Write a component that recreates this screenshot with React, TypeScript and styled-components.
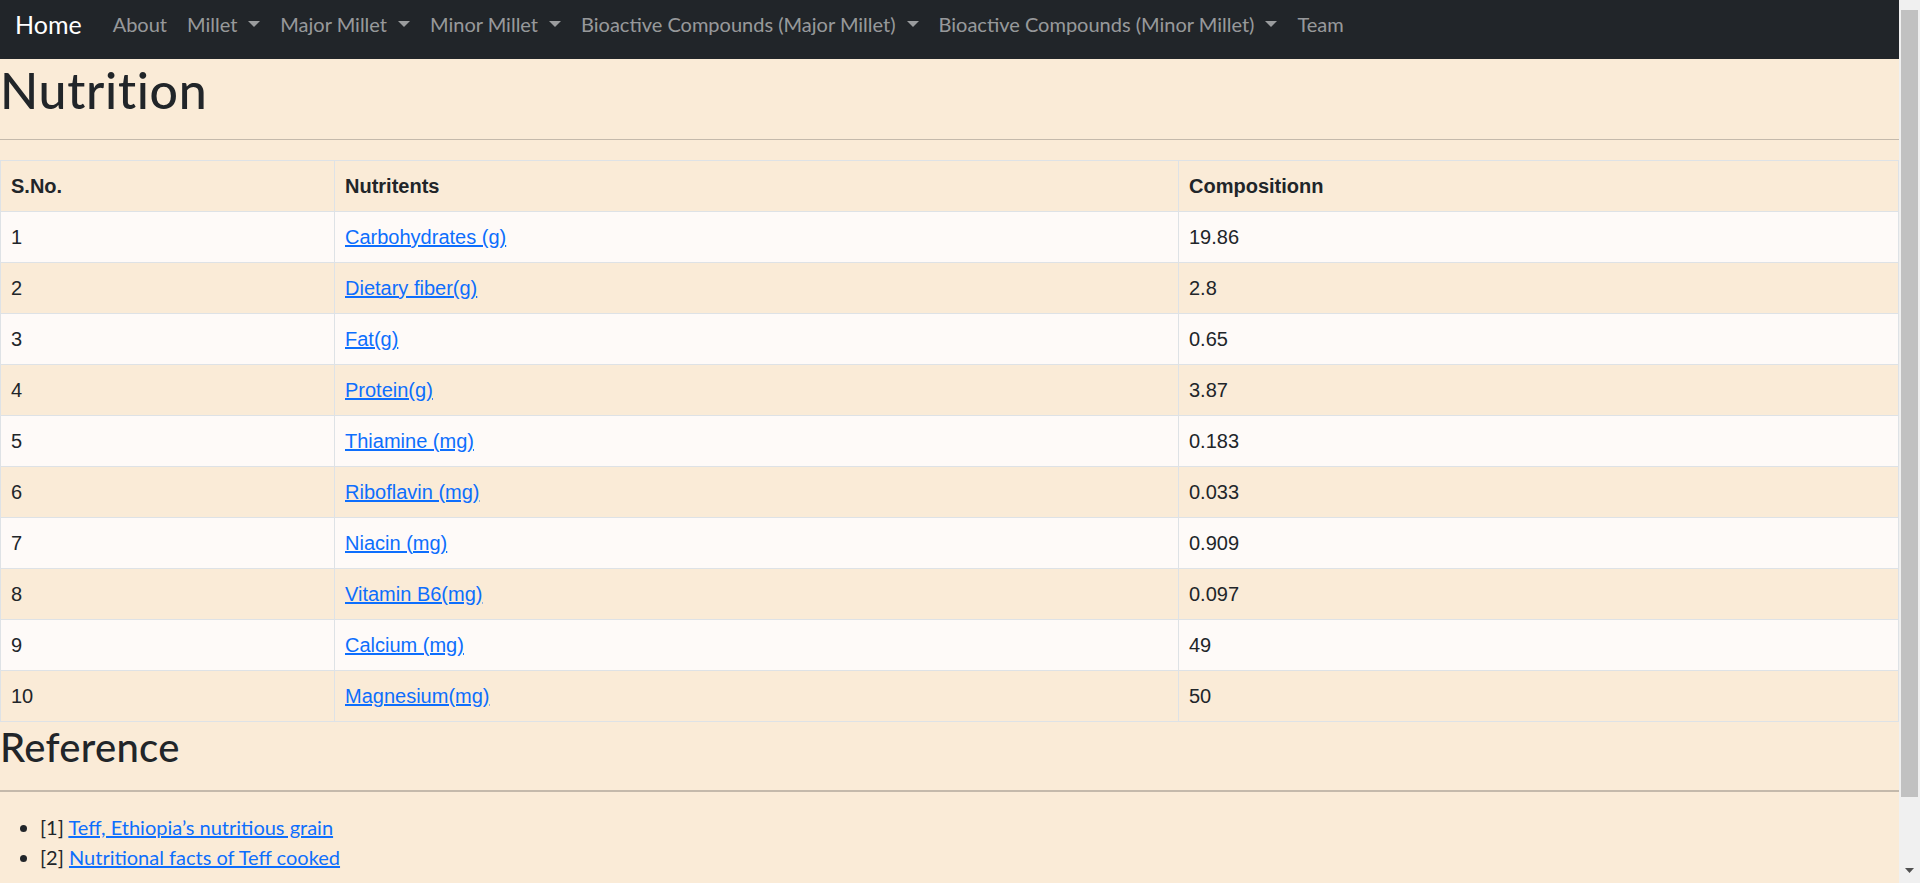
import React from 'react';
import styled, { createGlobalStyle, css } from 'styled-components';

const GlobalStyle = createGlobalStyle`
  body {
    margin: 0;
    background: #faebd7;
    color: #212529;
    font-family: Lato, "Open Sans", sans-serif;
    font-size: 20px;
    line-height: 1.5;
  }
`;

const Shell = styled.div`
  display: flex;
  align-items: flex-start;
`;

const Page = styled.div`
  flex: 1;
  min-width: 0;
`;

const ScrollTrack = styled.aside`
  width: 21px;
  height: 100vh;
  flex: none;
  display: flex;
  flex-direction: column;
  align-items: center;
  background: #f0f0f0;
`;

const ScrollThumb = styled.div`
  width: 17px;
  height: 787px;
  margin-top: 10px;
  background: #c1c1c1;
`;

const ScrollArrow = styled.svg`
  display: block;
  margin-top: auto;
  margin-bottom: 10px;
`;

const NavBar = styled.nav`
  display: flex;
  align-items: flex-start;
  height: 59px;
  box-sizing: border-box;
  padding: 9px 15px 0;
  background: #212529;
`;

const Brand = styled.a`
  font-size: 25px;
  line-height: 30px;
  color: #fff;
  margin-right: 21px;
  text-decoration: none;
`;

const NavList = styled.ul`
  display: flex;
  list-style: none;
  margin: 0;
  padding: 0;
`;

const NavLink = styled.a<{ $dropdown?: boolean }>`
  display: block;
  padding: 0 10px;
  font-size: 20px;
  line-height: 30px;
  color: rgba(255, 255, 255, 0.55);
  text-decoration: none;
  white-space: nowrap;
  ${(p) =>
    p.$dropdown &&
    css`
      &::after {
        content: '';
        display: inline-block;
        margin-left: 11px;
        vertical-align: 5px;
        border-top: 6px solid;
        border-right: 6px solid transparent;
        border-left: 6px solid transparent;
      }
    `}
`;

const PageTitle = styled.h1`
  margin: 0;
  padding-top: 2px;
  font-size: 50px;
  line-height: 58px;
  font-weight: 500;
  letter-spacing: 0.7px;
`;

const SectionTitle = styled.h2`
  margin: 0;
  padding-top: 2px;
  font-size: 40px;
  line-height: 46px;
  font-weight: 500;
  letter-spacing: 0.3px;
`;

const Rule = styled.hr<{ $thick?: boolean }>`
  margin: 20px 0;
  border: 0;
  border-top: ${(p) => (p.$thick ? 2 : 1)}px solid #c4b9ab;
`;

const Table = styled.table`
  width: 100%;
  border-collapse: collapse;
  table-layout: fixed;
  font-family: "Liberation Sans", Arial, sans-serif;
  font-size: 20px;
  line-height: 30px;
`;

const HeadCell = styled.th`
  padding: 10px;
  border: 1px solid #dee2e6;
  text-align: left;
  font-weight: bold;
  background: #faebd7;
`;

const Row = styled.tr<{ $odd: boolean }>`
  background: ${(p) => (p.$odd ? '#fefaf8' : '#faebd7')};
`;

const Cell = styled.td`
  padding: 10px;
  border: 1px solid #dee2e6;
`;

const Link = styled.a`
  color: #0d6efd;
  text-decoration: underline;
`;

const RefList = styled.ul`
  margin: 0 0 20px;
  padding-left: 40px;
  font-size: 20px;
  line-height: 30px;
`;

const navItems: { label: string; dropdown?: boolean }[] = [
  { label: 'About' },
  { label: 'Millet', dropdown: true },
  { label: 'Major Millet', dropdown: true },
  { label: 'Minor Millet', dropdown: true },
  { label: 'Bioactive Compounds (Major Millet)', dropdown: true },
  { label: 'Bioactive Compounds (Minor Millet)', dropdown: true },
  { label: 'Team' },
];

const nutrients: [string, string][] = [
  ['Carbohydrates (g)', '19.86'],
  ['Dietary fiber(g)', '2.8'],
  ['Fat(g)', '0.65'],
  ['Protein(g)', '3.87'],
  ['Thiamine (mg)', '0.183'],
  ['Riboflavin (mg)', '0.033'],
  ['Niacin (mg)', '0.909'],
  ['Vitamin B6(mg)', '0.097'],
  ['Calcium (mg)', '49'],
  ['Magnesium(mg)', '50'],
];

export default function App() {
  return (
    <>
      <GlobalStyle />
      <Shell>
        <Page>
          <NavBar>
            <Brand href="#">Home</Brand>
            <NavList>
              {navItems.map((n) => (
                <li key={n.label}>
                  <NavLink href="#" $dropdown={n.dropdown}>
                    {n.label}
                  </NavLink>
                </li>
              ))}
            </NavList>
          </NavBar>
          <main>
            <PageTitle>Nutrition</PageTitle>
            <Rule />
            <Table>
              <colgroup>
                <col style={{ width: 334 }} />
                <col style={{ width: 844 }} />
                <col />
              </colgroup>
              <thead>
                <tr>
                  <HeadCell>S.No.</HeadCell>
                  <HeadCell>Nutritents</HeadCell>
                  <HeadCell>Compositionn</HeadCell>
                </tr>
              </thead>
              <tbody>
                {nutrients.map(([name, value], i) => (
                  <Row key={name} $odd={i % 2 === 0}>
                    <Cell>{i + 1}</Cell>
                    <Cell>
                      <Link href="#">{name}</Link>
                    </Cell>
                    <Cell>{value}</Cell>
                  </Row>
                ))}
              </tbody>
            </Table>
            <SectionTitle>Reference</SectionTitle>
            <Rule $thick />
            <RefList>
              <li>
                [1] <Link href="#">Teff, Ethiopia’s nutritious grain</Link>
              </li>
              <li>
                [2] <Link href="#">Nutritional facts of Teff cooked</Link>
              </li>
            </RefList>
          </main>
        </Page>
        <ScrollTrack aria-hidden>
          <ScrollThumb />
          <ScrollArrow width="9" height="5" viewBox="0 0 9 5">
            <path d="M0 0h9L4.5 5z" fill="#505050" />
          </ScrollArrow>
        </ScrollTrack>
      </Shell>
    </>
  );
}
